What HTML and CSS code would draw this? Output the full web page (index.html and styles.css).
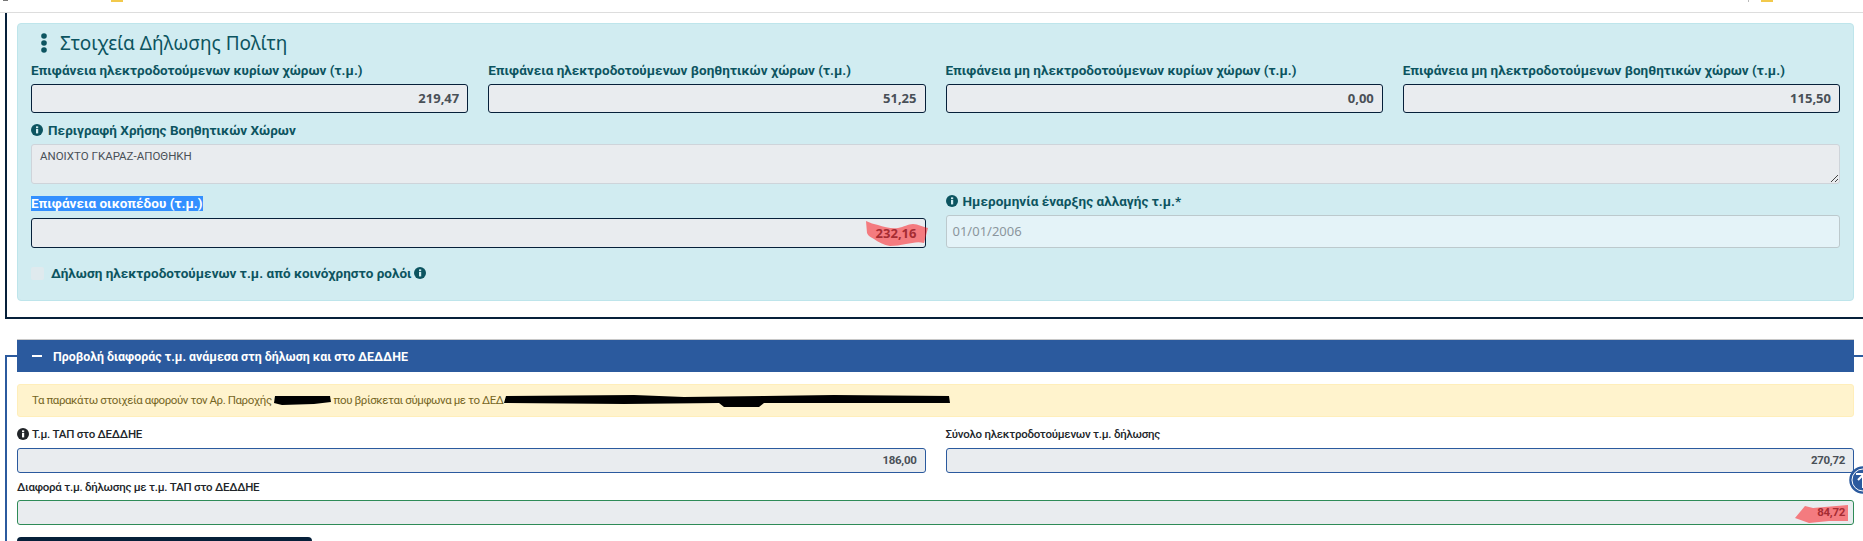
FILE: index.html
```html
<!DOCTYPE html>
<html lang="el">
<head>
<meta charset="utf-8">
<title>Στοιχεία Δήλωσης Πολίτη</title>
<link rel="stylesheet" href="styles.css">
</head>
<body>
<header class="topbar">
  <span class="mark mark-grey"></span>
  <span class="mark mark-yellow"></span>
  <span class="topbar-space"></span>
  <span class="mark-rule"></span>
  <span class="mark mark-yellow mark-right"></span>
</header>

<section class="frame-dark">
  <div class="card">
    <h2 class="card-title">
      <svg class="dots" viewBox="0 0 8 20" width="8" height="20"><circle cx="4" cy="3" r="2.8"/><circle cx="4" cy="10" r="2.8"/><circle cx="4" cy="17" r="2.8"/></svg>
      Στοιχεία Δήλωσης Πολίτη
    </h2>
    <div class="four-cols">
      <div><div class="label">Επιφάνεια ηλεκτροδοτούμενων κυρίων χώρων (τ.μ.)</div><div class="box box-dark">219,47</div></div>
      <div><div class="label">Επιφάνεια ηλεκτροδοτούμενων βοηθητικών χώρων (τ.μ.)</div><div class="box box-dark">51,25</div></div>
      <div><div class="label">Επιφάνεια μη ηλεκτροδοτούμενων κυρίων χώρων (τ.μ.)</div><div class="box box-dark">0,00</div></div>
      <div><div class="label">Επιφάνεια μη ηλεκτροδοτούμενων βοηθητικών χώρων (τ.μ.)</div><div class="box box-dark">115,50</div></div>
    </div>
    <div class="label label-wide">
      <svg class="info" viewBox="0 0 12 12" width="12" height="12"><circle cx="6" cy="6" r="6" fill="#0c5460"/><rect x="5" y="5" width="2.2" height="4.4" fill="#d1ecf1"/><rect x="5" y="2.4" width="2.2" height="1.8" fill="#d1ecf1"/></svg>
      Περιγραφή Χρήσης Βοηθητικών Χώρων
    </div>
    <div class="area">
      ΑΝΟΙΧΤΟ ΓΚΑΡΑΖ-ΑΠΟΘΗΚΗ
      <svg class="grip" viewBox="0 0 9 9" width="9" height="9"><path d="M1 8 8 1M5 8 8 5" stroke="#444" stroke-width="1" fill="none"/></svg>
    </div>
    <div class="two-cols">
      <div>
        <div class="label label-selected"><span class="selected">Επιφάνεια οικοπέδου (τ.μ.)</span></div>
        <div class="box box-dark box-plot">232,16
          <svg class="marker marker-plot" viewBox="0 0 63 25" width="63" height="25"><path d="M0 0C4 2 8 3 12 4C18 6 26 8 32 7C38 6 42 3 47 3C52 3 57 6 62 7L58 22C52 20 46 22 40 23C34 24 30 25 24 25C18 24 12 21 8 18C5 16 2 15 1 12Z"/></svg>
        </div>
      </div>
      <div>
        <div class="label">
          <svg class="info" viewBox="0 0 12 12" width="12" height="12"><circle cx="6" cy="6" r="6" fill="#0c5460"/><rect x="5" y="5" width="2.2" height="4.4" fill="#d1ecf1"/><rect x="5" y="2.4" width="2.2" height="1.8" fill="#d1ecf1"/></svg>
          Ημερομηνία έναρξης αλλαγής τ.μ.*
        </div>
        <div class="date">01/01/2006</div>
      </div>
    </div>
    <div class="check-row">
      <span class="check"></span>
      <span class="label label-check">Δήλωση ηλεκτροδοτούμενων τ.μ. από κοινόχρηστο ρολόι</span>
      <svg class="info" viewBox="0 0 12 12" width="12" height="12"><circle cx="6" cy="6" r="6" fill="#0c5460"/><rect x="5" y="5" width="2.2" height="4.4" fill="#d1ecf1"/><rect x="5" y="2.4" width="2.2" height="1.8" fill="#d1ecf1"/></svg>
    </div>
  </div>
</section>

<section class="frame-blue">
  <div class="panel-head">
    <span class="minus"></span>
    <span>Προβολή διαφοράς τ.μ. ανάμεσα στη δήλωση και στο ΔΕΔΔΗΕ</span>
  </div>
  <div class="alert">
    Τα παρακάτω στοιχεία αφορούν τον Αρ. Παροχής
    <svg class="scribble" viewBox="0 0 57 9" width="57" height="9" preserveAspectRatio="none"><path d="M1 0 56 0 57 6 40 8 8 9 0 7Z"/></svg>
    που βρίσκεται σύμφωνα με το ΔΕΔ<svg class="scribble" viewBox="0 0 446 12" width="446" height="12" preserveAspectRatio="none"><path d="M2 1 130 0 180 2 260 1 330 0 445 1 446 8 260 8 255 12 220 12 215 8 120 9 0 8Z"/></svg>
  </div>
  <div class="lower-cols">
    <div>
      <div class="label-plain">
        <svg class="info" viewBox="0 0 12 12" width="12" height="12"><circle cx="6" cy="6" r="6" fill="#212529"/><rect x="5" y="5" width="2.2" height="4.4" fill="#fff"/><rect x="5" y="2.4" width="2.2" height="1.8" fill="#fff"/></svg>
        Τ.μ. ΤΑΠ στο ΔΕΔΔΗΕ
      </div>
      <div class="box box-blue">186,00</div>
    </div>
    <div>
      <div class="label-plain">Σύνολο ηλεκτροδοτούμενων τ.μ. δήλωσης</div>
      <div class="box box-blue">270,72</div>
    </div>
  </div>
  <div class="label-plain label-diff">Διαφορά τ.μ. δήλωσης με τ.μ. ΤΑΠ στο ΔΕΔΔΗΕ</div>
  <div class="box box-green">84,72
    <svg class="marker marker-diff" viewBox="0 0 53 18" width="53" height="18"><path d="M0 13 10 1 18 3 53 0V16H34L14 18Z"/></svg>
  </div>
  <div class="dark-button"></div>
</section>

<div class="to-top">
  <svg viewBox="0 0 28 28" width="28" height="28"><circle cx="14" cy="14" r="13" fill="#2b5a9e" stroke="#2b5a9e" stroke-width="1.5"/><circle cx="14" cy="14" r="11" fill="none" stroke="#fff" stroke-width="1"/><path d="M7 8H21M14 8V22M9 14 14 9 19 14" stroke="#fff" stroke-width="2" fill="none"/></svg>
</div>
</body>
</html>
```

FILE: styles.css
```css
* { box-sizing: border-box; }

html, body {
  margin: 0;
  height: 541px;
  overflow: hidden;
  background: #fff;
  font-family: "Noto Sans", "Open Sans", sans-serif;
}

.topbar {
  display: flex;
  height: 13px;
  border-bottom: 1px solid #ddd;
  padding-left: 3px;
  padding-right: 90px;
}
.mark { display: block; height: 1px; }
.mark-grey { width: 5px; background: #777; margin-right: 103px; }
.mark-yellow { width: 12px; height: 2px; background: #f2c94c; }
.mark-right { margin-left: 12px; }
.topbar-space { flex: 1; }
.mark-rule { width: 1px; height: 2px; background: #bbb; }

.frame-dark {
  margin-left: 5px;
  height: 306px;
  border-left: 2px solid #06203a;
  border-bottom: 2px solid #06203a;
  padding: 10px 9px 0 10px;
}

.card {
  height: 278px;
  background: #d1ecf1;
  border: 1px solid #bee5eb;
  border-radius: 4px;
  padding: 0 13px;
  color: #0c5460;
}

.card-title {
  display: flex;
  align-items: center;
  gap: 12px;
  height: 26px;
  margin: 6px 0 0 9px;
  font-size: 19px;
  font-weight: 400;
  line-height: 26px;
}
.dots { fill: #0c5460; }

.four-cols {
  display: grid;
  grid-template-columns: repeat(4, 1fr);
  column-gap: 20px;
  margin-top: 5px;
}
.two-cols {
  display: grid;
  grid-template-columns: 1fr 1fr;
  column-gap: 20px;
  align-items: end;
  margin-top: 8px;
}

.label {
  display: flex;
  align-items: center;
  gap: 5px;
  height: 18px;
  margin-bottom: 5px;
  font-family: Roboto, "Noto Sans", sans-serif;
  font-size: 13.5px;
  font-weight: 700;
  letter-spacing: 0.03px;
  line-height: 18px;
  white-space: nowrap;
}
.label-wide { margin-top: 8px; }
.label-selected { height: 15px; margin-bottom: 7px; }
.selected {
  background: #3390ff;
  color: #fff;
  line-height: 15px;
  height: 15px;
  display: block;
}

.box {
  position: relative;
  background: #e9ecef;
  border-radius: 3px;
  color: #495057;
  font-size: 13px;
  font-weight: 700;
  text-align: right;
}
.box-dark {
  height: 29px;
  border: 1px solid #06203a;
  padding-right: 8px;
  line-height: 27px;
}
.box-plot { height: 30px; line-height: 28px; }
.box-blue, .box-green {
  height: 25px;
  padding-right: 8px;
  font-family: Roboto, "Noto Sans", sans-serif;
  font-size: 11.5px;
  letter-spacing: -0.3px;
  line-height: 23px;
}
.box-blue { border: 1px solid #2b5a9e; }
.box-green { border: 1px solid #2e8b57; }

.area {
  position: relative;
  height: 40px;
  background: #e9ecef;
  border: 1px solid #ced4da;
  border-radius: 3px;
  padding: 3px 8px;
  color: #495057;
  font-family: Roboto, "Noto Sans", sans-serif;
  font-size: 11.5px;
  line-height: 16px;
}
.grip { position: absolute; right: 0; bottom: 0; }

.date {
  height: 33px;
  background: #e4f3f8;
  border: 1px solid #bcc9cd;
  border-radius: 3px;
  padding-left: 6px;
  color: #8b969d;
  font-size: 13px;
  line-height: 31px;
}

.info { flex: none; }

.check-row {
  display: flex;
  align-items: center;
  height: 18px;
  margin-top: 16px;
}
.check {
  width: 13px;
  height: 13px;
  margin-right: 7px;
  background: #dfeaee;
  border-radius: 2px;
}
.label-check { margin: 0 2px 0 0; }

.frame-blue {
  margin: 36px 0 0 5px;
  height: 186px;
  border-top: 2px solid #2b5a9e;
  border-left: 2px solid #2b5a9e;
  padding: 0 9px 0 10px;
}

.panel-head {
  display: flex;
  align-items: center;
  gap: 11px;
  height: 33px;
  margin-top: -18px;
  padding-left: 15px;
  background: #2b5a9e;
  border-top: 1px solid #c8c8c8;
  color: #fff;
  font-family: Roboto, "Noto Sans", sans-serif;
  font-size: 12.4px;
  font-weight: 700;
  position: relative;
}
.minus { width: 10px; height: 2px; background: #fff; }

.alert {
  display: block;
  height: 33px;
  margin-top: 12px;
  padding-left: 14px;
  background: #fff3cd;
  border: 1px solid #ffeeba;
  border-radius: 3px;
  color: #75651f;
  font-family: Roboto, "Noto Sans", sans-serif;
  font-size: 11.5px;
  letter-spacing: -0.42px;
  line-height: 31px;
  white-space: nowrap;
}
.scribble { fill: #000; vertical-align: middle; }

.lower-cols {
  display: grid;
  grid-template-columns: 1fr 1fr;
  column-gap: 20px;
  margin-top: 8px;
}

.label-plain {
  display: flex;
  align-items: center;
  gap: 3px;
  height: 18px;
  margin-bottom: 5px;
  color: #212529;
  font-family: Roboto, "Noto Sans", sans-serif;
  font-size: 11.5px;
  font-weight: 500;
  letter-spacing: -0.25px;
  line-height: 18px;
}
.label-diff { margin-top: 5px; margin-bottom: 4px; }

.marker {
  position: absolute;
  fill: rgba(255, 10, 15, 0.5);
}
.marker-plot { right: -4px; top: 2px; }
.marker-diff { right: 5px; top: 4px; }

.dark-button {
  width: 295px;
  height: 24px;
  margin-top: 12px;
  background: #06203a;
  border-radius: 4px;
}

.to-top {
  position: fixed;
  top: 466px;
  left: 1849px;
  line-height: 0;
}
```
